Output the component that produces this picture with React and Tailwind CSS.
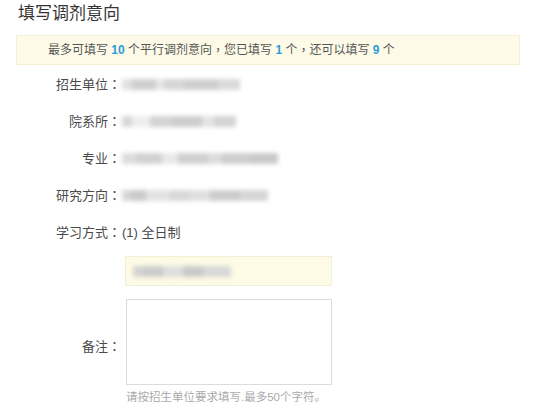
import React from "react";

const font = { fontFamily: '"Liberation Sans", "Noto Sans CJK SC", sans-serif' };

// full-width punctuation centered in its cell, as in the reference
function P({ children }) {
  return <span className="font-['Noto_Sans_CJK_TC']">{children}</span>;
}

function Blurred({ segments }) {
  return (
    <div className="flex h-[11px] items-center blur-[2px]">
      {segments.map((s, i) => (
        <div key={i} className={`h-full ${s}`} />
      ))}
    </div>
  );
}

function Row({ label, children }) {
  return (
    <div className="flex h-[37px] items-center">
      <div className="w-[121px] text-right text-[13px] text-[#4a4a4a]">
        {label}
        <P>：</P>
      </div>
      <div className="ml-[1px] flex items-center text-[13px] text-[#4a4a4a]">{children}</div>
    </div>
  );
}

export default function App() {
  return (
    <div className="w-[553px] h-[413px] overflow-hidden bg-white [text-spacing-trim:space-all]" style={font}>
      {/* TITLE */}
      <div className="px-[18px] pt-[4px] text-[17px] leading-[20px] text-[#333]">填写调剂意向</div>

      {/* NOTICE */}
      <div className="mt-[11px] ml-[16px] flex h-[30px] w-[504px] items-center border border-[#f4efd2] bg-[#fdfbe7] pl-[31px] text-[12px] text-[#555]">
        最多可填写&nbsp;<b className="text-[#2b9bd8]">10</b>&nbsp;个平行调剂意向<P>，</P>您已填写&nbsp;
        <b className="text-[#2b9bd8]">1</b>&nbsp;个<P>，</P>还可以填写&nbsp;<b className="text-[#2b9bd8]">9</b>&nbsp;个
      </div>

      {/* FIELDS */}
      <div className="mt-[1px]">
        <Row label="招生单位">
          <Blurred
            segments={[
              "w-[10px] bg-[#e0e0e0]",
              "w-[24px] bg-[#cfcfcf]",
              "w-[8px] bg-[#e6e6e6]",
              "w-[20px] bg-[#d6d6d6]",
              "w-[34px] bg-[#cfcfcf]",
              "w-[22px] bg-[#dadada]",
            ]}
          />
        </Row>
        <Row label="院系所">
          <Blurred
            segments={[
              "w-[10px] bg-[#d8d8d8]",
              "w-[18px] bg-[#eeeeee]",
              "w-[22px] bg-[#d4d4d4]",
              "w-[30px] bg-[#cdcdcd]",
              "w-[12px] bg-[#e4e4e4]",
              "w-[22px] bg-[#d4d4d4]",
            ]}
          />
        </Row>
        <Row label="专业">
          <Blurred
            segments={[
              "w-[14px] bg-[#dcdcdc]",
              "w-[26px] bg-[#d2d2d2]",
              "w-[16px] bg-[#e8e8e8]",
              "w-[30px] bg-[#d0d0d0]",
              "w-[14px] bg-[#dcdcdc]",
              "w-[30px] bg-[#cecece]",
              "w-[26px] bg-[#c9c9c9]",
            ]}
          />
        </Row>
        <Row label="研究方向">
          <Blurred
            segments={[
              "w-[8px] bg-[#d8d8d8]",
              "w-[16px] bg-[#cbcbcb]",
              "w-[24px] bg-[#e2e2e2]",
              "w-[20px] bg-[#d8d8d8]",
              "w-[20px] bg-[#dfdfdf]",
              "w-[30px] bg-[#cdcdcd]",
              "w-[28px] bg-[#d6d6d6]",
            ]}
          />
        </Row>
        <Row label="学习方式">(1) 全日制</Row>
      </div>

      {/* SELECTED BOX */}
      <div className="mt-[5px] ml-[125px] flex h-[30px] w-[207px] items-center border border-[#f3efd2] bg-[#fdfbe5] pl-[7px]">
        <Blurred
          segments={[
            "w-[10px] bg-[#d4d4d4]",
            "w-[20px] bg-[#cbcbcb]",
            "w-[20px] bg-[#dedede]",
            "w-[20px] bg-[#c9c9c9]",
            "w-[28px] bg-[#d8d8d8]",
          ]}
        />
      </div>

      {/* REMARK */}
      <div className="mt-[13px] flex items-center">
        <div className="w-[121px] pt-[8px] text-right text-[13px] text-[#4a4a4a]">
          备注<P>：</P>
        </div>
        <div className="ml-[5px] h-[86px] w-[206px] border border-[#dcdcdc] bg-white" />
      </div>
      <div className="mt-[4px] ml-[126px] text-[11.5px] leading-[16px] text-[#aaa]">
        请按招生单位要求填写.最多50个字符。
      </div>
    </div>
  );
}
